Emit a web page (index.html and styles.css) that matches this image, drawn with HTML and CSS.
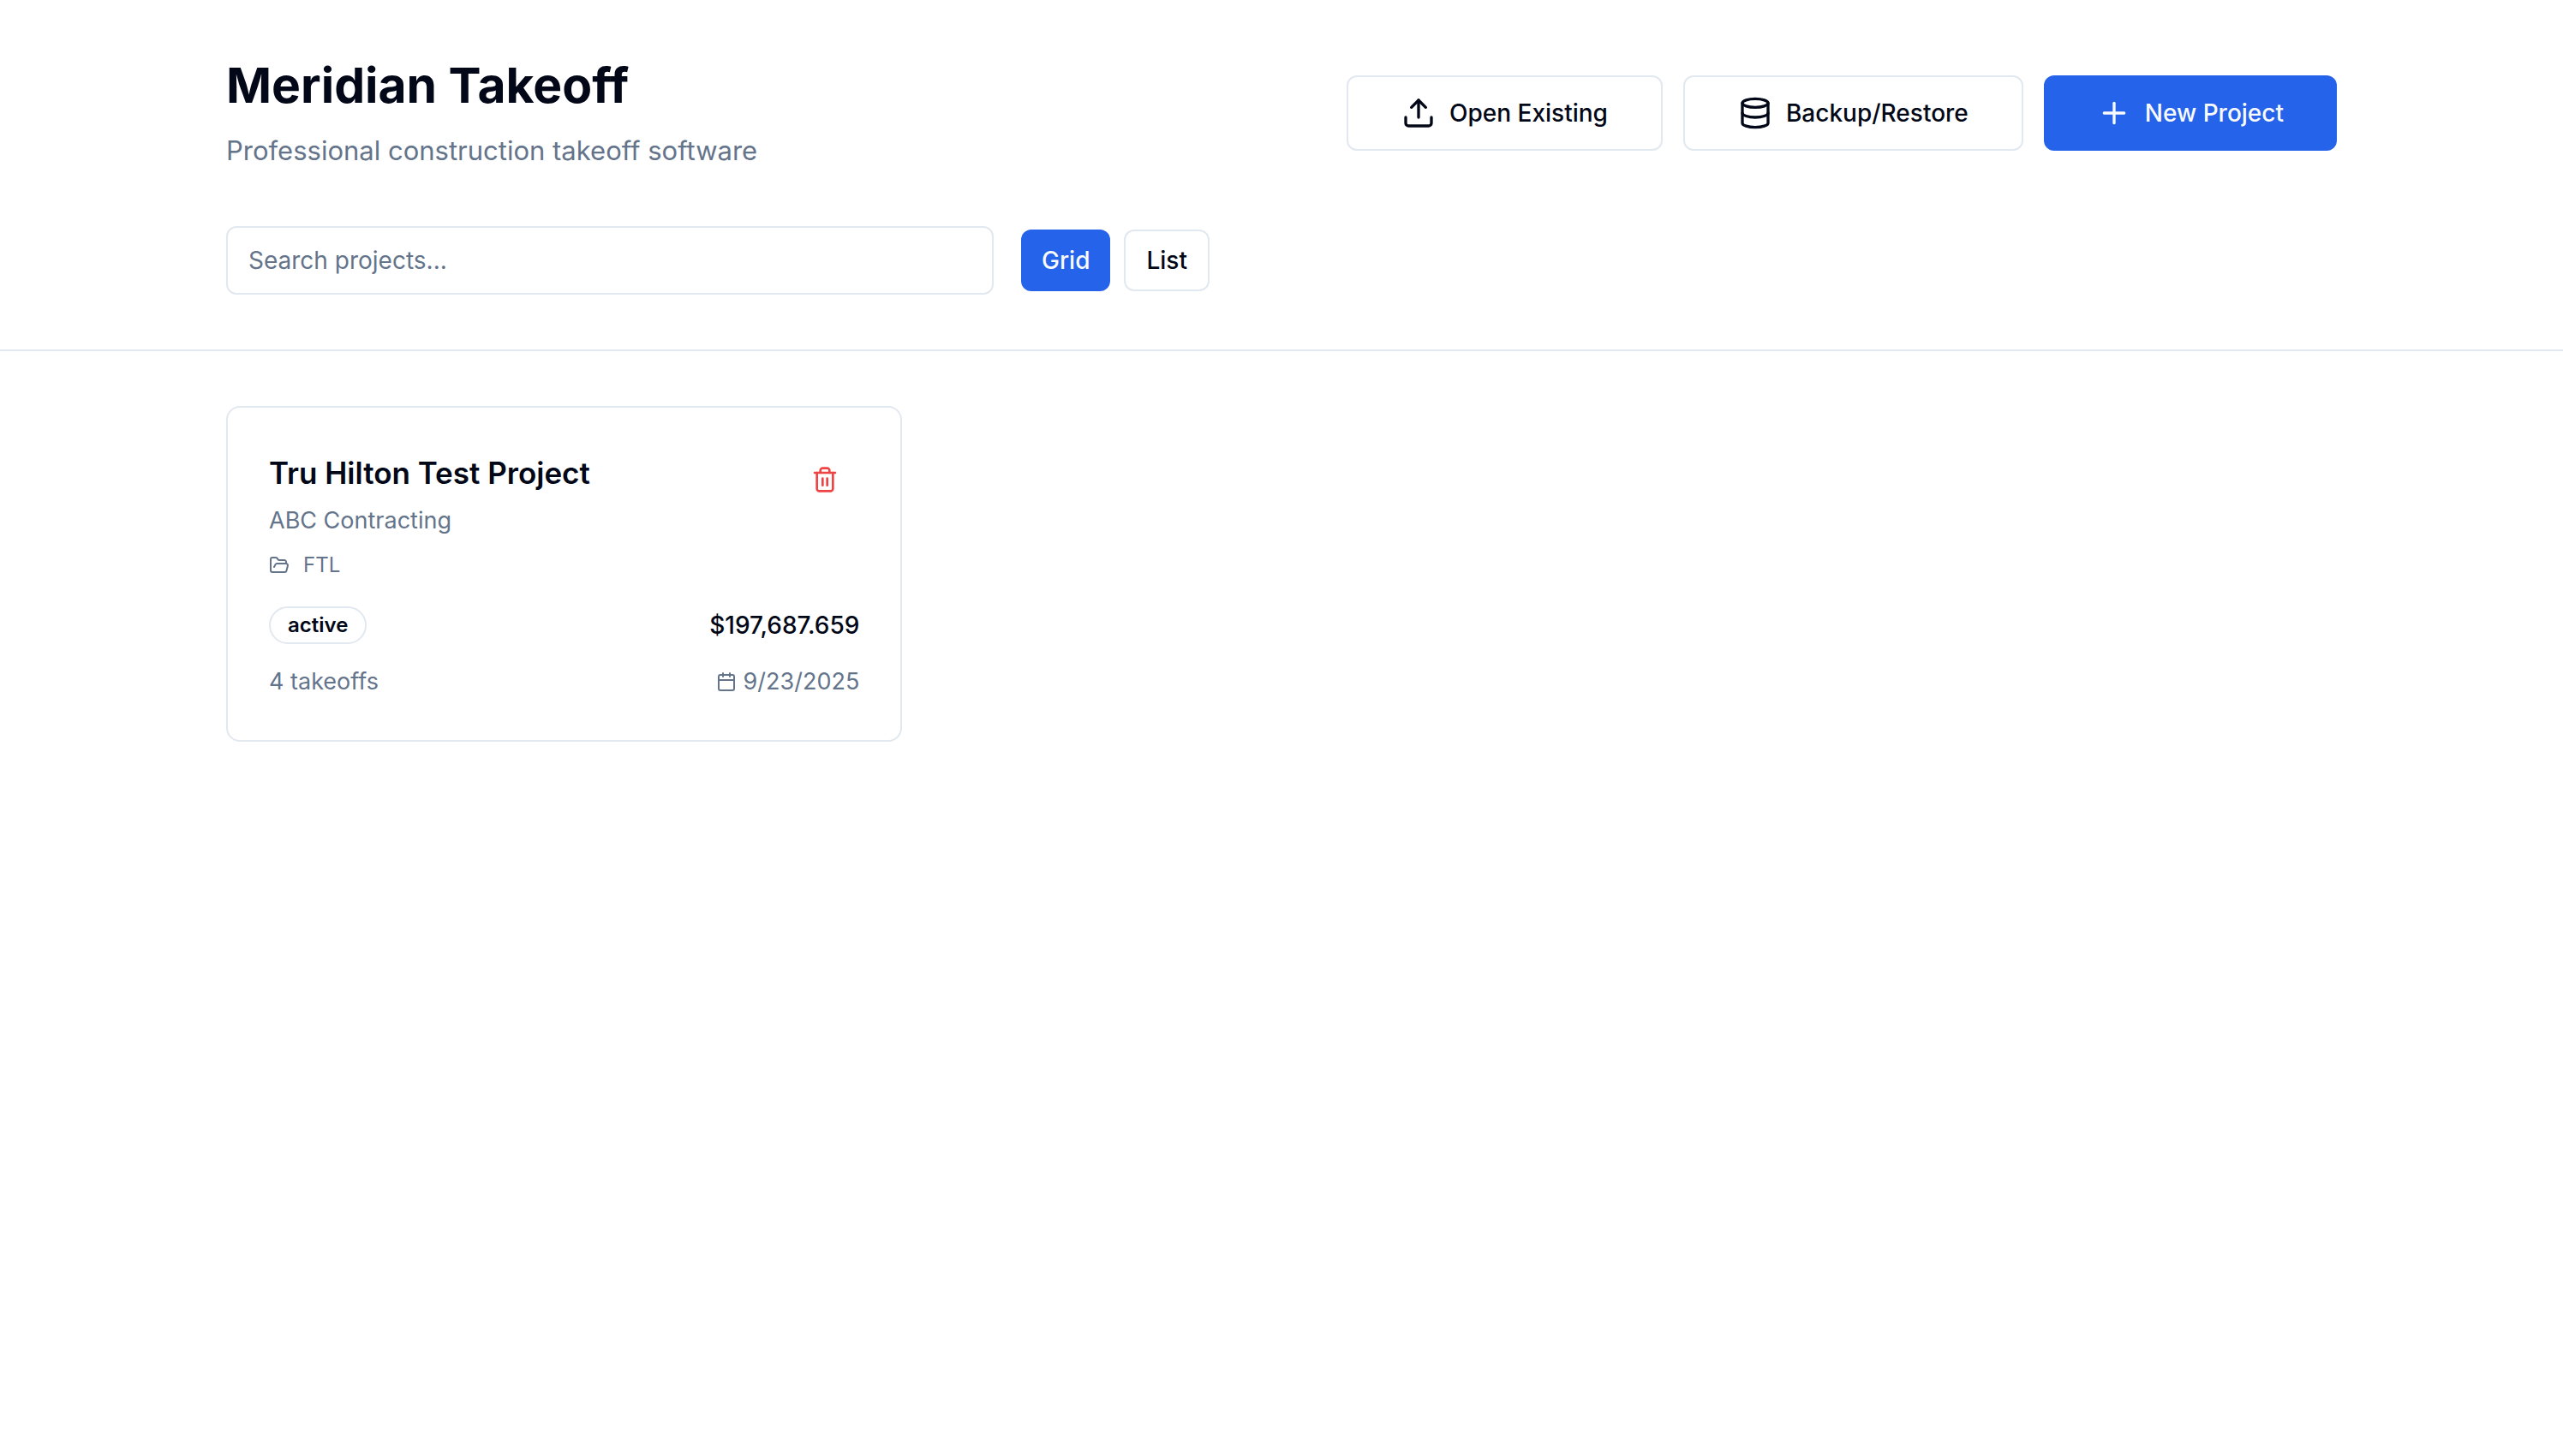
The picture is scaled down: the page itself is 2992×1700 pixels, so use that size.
FILE: index.html
```html
<!DOCTYPE html>
<html lang="en">
<head>
<meta charset="utf-8">
<meta name="viewport" content="width=device-width, initial-scale=1">
<title>Meridian Takeoff</title>
<link rel="stylesheet" href="styles.css">
</head>
<body>
<header class="page-header">
  <div class="container header-inner">
    <div class="header-top">
      <div>
        <h1 class="page-title">Meridian Takeoff</h1>
        <p class="page-subtitle">Professional construction takeoff software</p>
      </div>
      <div class="header-actions">
        <button type="button" class="btn btn-lg btn-outline">
          <svg class="icon icon-lg" viewBox="0 0 24 24" aria-hidden="true"><path d="M12 3v12"/><path d="m17 8-5-5-5 5"/><path d="M21 15v4a2 2 0 0 1-2 2H5a2 2 0 0 1-2-2v-4"/></svg>
          Open Existing
        </button>
        <button type="button" class="btn btn-lg btn-outline">
          <svg class="icon icon-lg" viewBox="0 0 24 24" aria-hidden="true"><ellipse cx="12" cy="5" rx="9" ry="3"/><path d="M3 5v14a9 3 0 0 0 18 0V5"/><path d="M3 12a9 3 0 0 0 18 0"/></svg>
          Backup/Restore
        </button>
        <button type="button" class="btn btn-lg btn-primary">
          <svg class="icon icon-lg" viewBox="0 0 24 24" aria-hidden="true"><path d="M5 12h14"/><path d="M12 5v14"/></svg>
          New Project
        </button>
      </div>
    </div>
    <div class="toolbar">
      <input type="search" class="search-input" placeholder="Search projects..." aria-label="Search projects">
      <div class="view-toggle">
        <button type="button" class="btn btn-sm btn-primary" aria-pressed="true">Grid</button>
        <button type="button" class="btn btn-sm btn-outline" aria-pressed="false">List</button>
      </div>
    </div>
  </div>
</header>
<main class="container project-grid">
  <article class="card">
    <div class="card-head">
      <div class="card-heading">
        <h2 class="card-title">Tru Hilton Test Project</h2>
        <p class="card-client">ABC Contracting</p>
        <p class="card-location">
          <svg class="icon icon-sm" viewBox="0 0 24 24" aria-hidden="true"><path d="m6 14 1.5-2.9A2 2 0 0 1 9.24 10H20a2 2 0 0 1 1.94 2.5l-1.54 6a2 2 0 0 1-1.95 1.5H4a2 2 0 0 1-2-2V5a2 2 0 0 1 2-2h3.9a2 2 0 0 1 1.69.9l.81 1.2a2 2 0 0 0 1.67.9H18a2 2 0 0 1 2 2v2"/></svg>
          FTL
        </p>
      </div>
      <button type="button" class="btn-delete" aria-label="Delete project">
        <svg class="icon icon-md" viewBox="0 0 24 24" aria-hidden="true"><path d="M3 6h18"/><path d="M19 6v14c0 1-1 2-2 2H7c-1 0-2-1-2-2V6"/><path d="M8 6V4c0-1 1-2 2-2h4c1 0 2 1 2 2v2"/><path d="M10 11v6"/><path d="M14 11v6"/></svg>
      </button>
    </div>
    <div class="card-body">
      <div class="card-row">
        <span class="badge">active</span>
        <span class="card-value">$197,687.659</span>
      </div>
      <div class="card-row card-meta">
        <span>4 takeoffs</span>
        <span class="card-date">
          <svg class="icon icon-sm" viewBox="0 0 24 24" aria-hidden="true"><path d="M8 2v4"/><path d="M16 2v4"/><rect width="18" height="18" x="3" y="4" rx="2"/><path d="M3 10h18"/></svg>
          <time datetime="2025-09-23">9/23/2025</time>
        </span>
      </div>
    </div>
  </article>
</main>
</body>
</html>
```
FILE: styles.css
```css
:root {
  --foreground: #020817;
  --muted: #64748b;
  --border: #e2e8f0;
  --primary: #2563eb;
  --primary-foreground: #f8fafc;
  --danger: #ef4444;
}

*,
*::before,
*::after {
  box-sizing: border-box;
}

body {
  margin: 0;
  background: #fff;
  color: var(--foreground);
  font-family: Inter, "Liberation Sans", sans-serif;
  font-size: 28px;
  line-height: 40px;
}

h1, h2, p {
  margin: 0;
}

button, input {
  font: inherit;
  color: inherit;
}

.container {
  width: 100%;
  max-width: 2560px;
  margin: 0 auto;
  padding: 64px 48px;
}

.page-header {
  border-bottom: 2px solid var(--border);
}

.header-inner {
  display: flex;
  flex-direction: column;
  gap: 64px;
}

.header-top {
  display: flex;
  flex-wrap: wrap;
  align-items: center;
  justify-content: space-between;
  gap: 32px;
}

.page-title {
  font-size: 57px;
  font-weight: 700;
  line-height: 72px;
}

.page-subtitle {
  margin-top: 16px;
  color: var(--muted);
  font-size: 31px;
  line-height: 48px;
}

.header-actions {
  display: flex;
  flex-wrap: wrap;
  gap: 24px;
}

.icon {
  flex: none;
  fill: none;
  stroke: currentColor;
  stroke-width: 2;
  stroke-linecap: round;
  stroke-linejoin: round;
}

.icon-lg {
  width: 40px;
  height: 40px;
}

.icon-md {
  width: 32px;
  height: 32px;
}

.icon-sm {
  width: 24px;
  height: 24px;
}

.btn {
  display: inline-flex;
  align-items: center;
  justify-content: center;
  gap: 16px;
  border: 0;
  border-radius: 12px;
  font-weight: 500;
  white-space: nowrap;
  cursor: pointer;
}

.btn-lg {
  height: 88px;
  padding: 0 62px;
}

.btn-sm {
  height: 72px;
  padding: 0 24px;
}

.btn-outline {
  border: 2px solid var(--border);
  background: #fff;
}

.btn-primary {
  background: var(--primary);
  color: var(--primary-foreground);
}

.toolbar {
  display: flex;
  flex-wrap: wrap;
  align-items: center;
  gap: 32px;
}

.search-input {
  width: 100%;
  max-width: 896px;
  height: 80px;
  padding: 0 24px;
  border: 2px solid var(--border);
  border-radius: 12px;
  background: #fff;
  appearance: none;
}

.search-input::placeholder {
  color: var(--muted);
  opacity: 1;
}

.view-toggle {
  display: flex;
  gap: 16px;
}

.project-grid {
  display: grid;
  grid-template-columns: repeat(3, minmax(0, 1fr));
  gap: 48px;
}

.card {
  display: flex;
  flex-direction: column;
  gap: 32px;
  padding: 48px;
  border: 2px solid var(--border);
  border-radius: 16px;
  background: #fff;
}

.card-head {
  display: flex;
  align-items: flex-start;
  justify-content: space-between;
}

.card-title {
  font-size: 35px;
  font-weight: 600;
  line-height: 56px;
}

.card-client {
  margin-top: 8px;
  color: var(--muted);
  font-size: 27px;
}

.card-location {
  display: flex;
  align-items: center;
  gap: 16px;
  margin-top: 16px;
  color: var(--muted);
  font-size: 24px;
  line-height: 32px;
}

.btn-delete {
  display: flex;
  align-items: center;
  height: 72px;
  padding: 0 24px;
  border: 0;
  border-radius: 12px;
  background: transparent;
  color: var(--danger);
  cursor: pointer;
}

.card-body {
  display: flex;
  flex-direction: column;
  gap: 24px;
}

.card-row {
  display: flex;
  align-items: center;
  justify-content: space-between;
}

.badge {
  padding: 4px 20px;
  border: 2px solid var(--border);
  border-radius: 22px;
  font-size: 24px;
  font-weight: 600;
  line-height: 32px;
}

.card-value {
  font-weight: 500;
}

.card-meta {
  color: var(--muted);
  font-size: 27px;
}

.card-date {
  display: flex;
  align-items: center;
  gap: 8px;
}

@media (max-width: 1800px) {
  .project-grid {
    grid-template-columns: repeat(2, minmax(0, 1fr));
  }
}

@media (max-width: 1100px) {
  .project-grid {
    grid-template-columns: minmax(0, 1fr);
  }
}
```
